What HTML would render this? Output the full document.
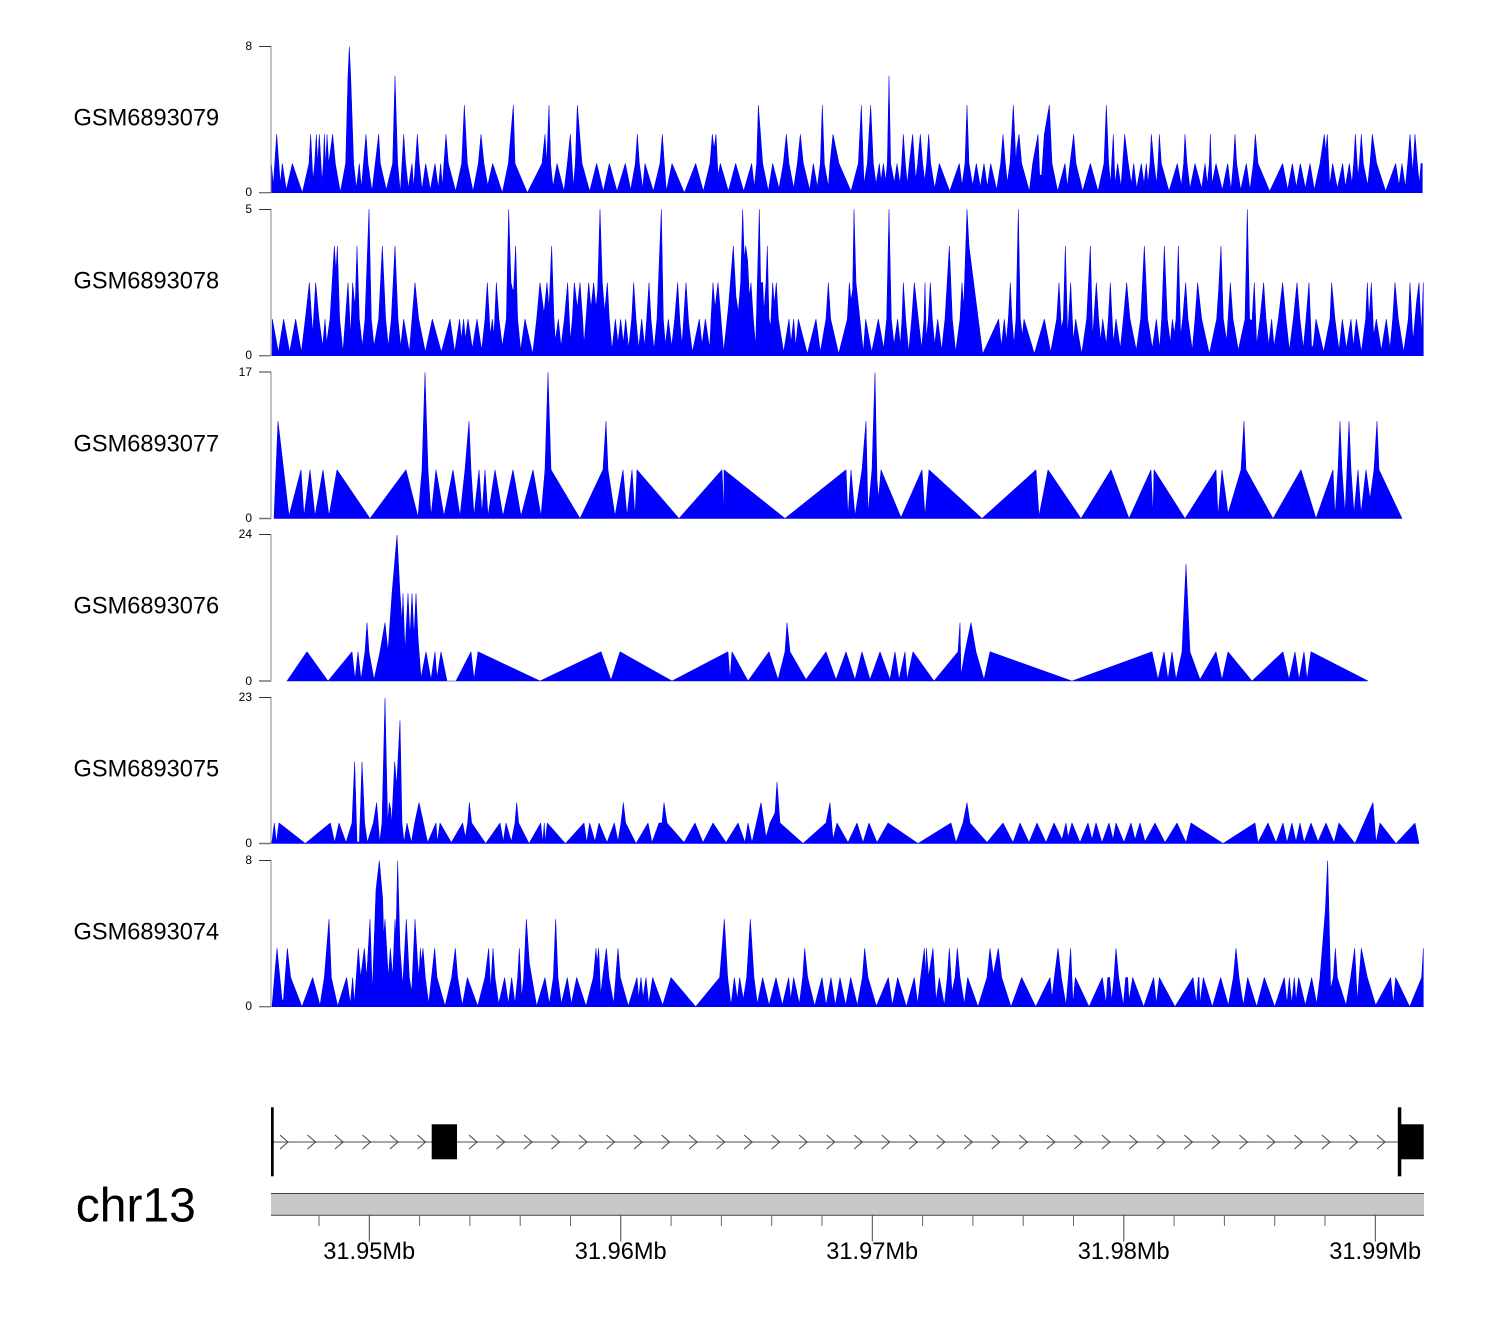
<!DOCTYPE html>
<html lang="en">
<head>
<meta charset="utf-8">
<title>Genome coverage tracks</title>
<style>
html,body{margin:0;padding:0;background:#fff}
svg{display:block}
text{font-family:"Liberation Sans",Arial,sans-serif;fill:#000}
.n{font-size:23.6px}
.y{font-size:12px;text-anchor:end}
.t{font-size:23.6px;text-anchor:middle}
polygon{fill:#0000ff;stroke:#0000ee;stroke-width:.55;vector-effect:non-scaling-stroke;stroke-linejoin:miter;stroke-miterlimit:1.5}
</style>
</head>
<body>
<svg width="1500" height="1320" viewBox="0 0 1500 1320" xmlns="http://www.w3.org/2000/svg">
<rect width="1500" height="1320" fill="#fff"/>

<!-- Track 1 -->
<g transform="translate(230,192.7) scale(.33333,-29.2)">
<polygon points="124,0 124,1 130,.25 140,2 151,.3 157,1 169,.1 187,1 217,0 237,1 242,2 249,.4 254,1 259,2 263,1 268,2 276,.35 280,1 283,2 287,.9 291,2 296,1 308,2 316,1 331,.02 347,1 354,4 358,5 362,4 371,1 379,.15 388,1 394,.15 408,2 414,1 426,.05 446,2 451,1 469,.1 488,1 495,4 503,1 511,0 521,2 527,1 535,.15 546,1 551,.15 562,2 568,1 576,.1 587,1 601,.1 615,1 625,.15 632,1 637,.2 648,2 655,1 677,.05 695,1 703,3 712,1 729,.05 745,1 753,2 762,1 773,.25 788,1 817,0 835,1 850,3 855,1 892,0 936,1 945,2 950,1 957,3 962,1 969,.2 981,1 1002,.05 1012,1 1021,2 1030,.2 1036,1 1042,3 1056,1 1079,.05 1100,1 1120,.05 1138,1 1161,.05 1186,1 1202,.1 1216,1 1222,2 1228,1 1238,.15 1238,0"/>
</g>
<g transform="translate(640,192.7) scale(.33333,-29.2)">
<polygon points="8,0 8,.15 15,1 40,.05 60,1 67,2 73,1 79,.05 96,1 133,0 167,1 190,.05 210,1 217,2 222,1.5 228,2 234,.6 241,1 265,.05 287,1 311,.05 335,1 343,.2 350,1 355,3 368,1 385,.05 398,1 417,.15 430,1 439,2 447,1 461,.15 472,1 481,2 490,1 509,.1 520,1 532,.2 541,1 547,3 553,1 565,.2 570,1 579,2 597,1 633,.05 655,1 664,3 672,.3 682,1 692,3 700,1 708,.3 718,1 723,.4 730,1 737,.4 742,1 747,4 752,1 763,.35 771,1 780,.3 785,1 790,2 796,1 802,.3 808,1 818,2 827,.45 833,1 841,2 848,1 854,.4 860,1 866,2 872,1 884,.15 898,1 929,.05 958,1 966,.25 975,1 981,3 987,1 998,.25 1009,1 1021,.2 1032,1 1042,.2 1052,1 1070,.1 1082,1 1089,2 1096,1 1102,.35 1110,1 1120,3 1128,1 1130,1.5 1137,2 1145,1 1168,.05 1178,1 1194,2 1199,.6 1199,0"/>
</g>
<g transform="translate(1040,192.7) scale(.33333,-29.2)">
<polygon points="-1,0 -1,.6 5,.6 13,2 28,3 36,1 53,.05 75,1 82,.2 90,1 101,2 108,1 128,.05 151,1 174,.05 192,1 199,3 206,1 212,.3 215,1 220,2 225,.3 233,1 243,.2 248,1 254,2 265,1 274,.3 281,1 290,.15 304,1 312,.3 319,1 324,.3 330,1 334,2 342,1 350,.3 354,1 358,2 364,1 387,.05 412,1 424,.25 431,1 435,2 441,1 450,.15 465,1 485,.15 495,1 502,.3 508,1 511,2 516,.3 528,1 547,.1 563,1 573,.1 580,1 585,2 590,1 602,.1 619,1 630,.1 640,1 646,2 654,1 689,.05 728,1 743,.1 757,1 769,.2 781,1 796,.15 810,1 823,.1 840,1 853,2 857,1.4 862,2 869,.25 878,1 892,.15 908,1 916,.2 928,1 936,.3 941,1 946,2 954,.55 958,1 964,2 970,1 983,.25 990,1 997,2 1010,1 1037,.05 1067,1 1077,.25 1086,1 1096,.2 1103,1 1110,2 1118,.7 1125,2 1132,1 1138,.3 1143,1 1147,1 1147,0"/>
</g>

<!-- Track 2 -->
<g transform="translate(230,355.7) scale(.33333,-36.6)">
<polygon points="126,0 127,1 145,.1 161,1 179,.1 197,1 214,.1 226,1 238,2 248,.6 257,2 267,1 278,.25 285,1 290,.35 300,1 313,3 318,2.3 322,3 329,1 339,.1 354,2 362,.55 368,2 373,1.5 376,1.5 381,3 388,1 397,.25 405,1 417,4 424,1 432,.25 446,1 457,3 467,1 475,.25 484,1 495,3 504,1 512,.25 521,1 538,.1 546,1 555,2 566,1 586,.1 607,1 634,.1 660,1 674,.1 689,1 694,.45 701,1 706,.45 714,1 727,.2 741,1 755,.15 765,1 772,2 781,.55 787,1 792,.55 799,2 807,1 817,.25 829,1 836,4 843,2 848,1.8 851,1.8 857,3 863,1 872,.15 885,1 908,.05 920,1 930,2 942,1.15 951,2 957,1.3 965,3 972,1 976,.4 985,1 993,.25 1003,1 1013,2 1021,.4 1027,1 1033,2 1042,1.3 1050,2 1058,1 1062,.3 1068,1 1076,2 1083,1.3 1091,2 1098,1.3 1103,1.8 1110,4 1117,2 1124,1.2 1132,2 1138,1 1146,.15 1156,1 1164,.35 1172,1 1180,.35 1187,1 1196,.2 1205,1 1211,2 1218,1 1226,.2 1235,1 1235,0"/>
</g>
<g transform="translate(640,355.7) scale(.33333,-36.6)">
<polygon points="5,0 5,1 14,.25 20,1 27,2 33,1 42,.15 51,1 64,4 70,1 76,.3 85,1 95,.25 104,1 113,2 120,.9 126,.3 131,1 138,2 146,.9 157,.1 178,1 186,.3 196,1 209,.2 213,1 219,2 225,1.3 234,2 243,1 251,.1 265,1.3 280,3 288,1.6 295,1.2 302,2 308,4 313,2.6 317,3 323,2.6 328,1.6 333,2 340,1 347,.25 352,2 358,4 362,2 368,2 372,1.2 378,2 382,3 387,1 392,.8 398,2 403,1.4 409,2 415,1 431,.1 447,1 453,.35 461,1 467,.25 475,1 502,.05 528,1 541,.1 558,1 565,2 572,1 596,.05 622,1 628,2 633,1.5 638,1.8 642,4 648,2 670,.1 677,1 695,.1 715,1 731,.2 740,1 747,4 754,1 762,.3 773,1 781,.3 786,1 790,2 797,1 806,.1 815,1 823,2 835,1 845,.2 852,1 855,2 859,.45 865,1 871,2 877,1 884,.3 893,1 905,.15 915,1 928,3 937,1 947,.1 960,1 966,2 971,1.3 981,4 987,3 1028,.05 1076,1 1084,.25 1093,1 1099,.4 1105,1 1111,2 1116,1 1122,.3 1128,1 1135,4 1141,1 1147,.55 1152,1 1183,.05 1213,1 1232,.1 1232,0"/>
</g>
<g transform="translate(1040,355.7) scale(.33333,-36.6)">
<polygon points="32,0 32,.1 50,1 57,2 64,.75 70,1 76,3 83,.55 92,2 100,.4 107,1 125,.05 140,1 151,3 158,.5 169,2 176,1 182,.4 188,1 199,.3 205,1 211,2 220,.35 228,1 241,.2 250,1 260,2 270,1 289,.15 302,1 313,3 323,1 337,.2 349,1 359,.2 365,1 373,3 382,1 391,.35 397,1 403,.6 408,1 415,3 422,.55 428,1 437,2 444,1 457,.15 465,1 473,2 485,1 508,.05 530,1 536,1.8 543,3 550,1 560,.4 571,2 579,1 595,.15 615,1 622,4 629,1 636,.95 643,2 650,.3 660,1 671,2 678,1 686,.3 695,1 702,.25 715,1 728,2 738,1 748,.15 760,1 771,2 780,1 790,.2 798,1 807,2 815,.2 820,.3 828,1 851,.1 870,1 875,2 885,1 897,.15 907,1 919,.2 933,1 940,.25 949,1 964,.1 977,1 982,2 987,1 994,2 1001,.55 1009,1 1024,.15 1039,1 1050,.2 1058,1 1065,2 1075,1 1091,.1 1105,1 1110,2 1119,.4 1130,1.5 1137,2 1144,.6 1150,2 1150,0"/>
</g>

<!-- Track 3 -->
<g transform="translate(0,518.5) scale(1,-48.7)">
<polygon points="274,0 278,2 289,.05 301,1 304,.05 310,1 315,.05 323,1 329,.05 337,1 370,0 406,1 418,.03 422,1 425,3 428,1 431,.05 436,1 444,.05 453,1 460,.05 465,1 469,2 471,1 474,.05 479,1 482,.1 485,1 488,.05 495,1 503,.05 513,1 521,.05 533,1 541,.05 545,1 548,3 551,1 580,0 603,1 606,2 608,1 615,.05 623,1 627,.05 632,1 635,.05 637,1 679,0 722,1 724,.05 724,1 785,0 846,1 848,.05 851,1 855,.05 862,1 866,2 868,.1 872,1 875,3 877,.8 878.5,.4 881,1 901,.02 922,1 925,.05 929,1 982,0 1036,1 1039,.05 1048,1 1081,0 1111,1 1129,0 1151,1 1153,.05 1154,1 1185,0 1216,1 1218,.05 1222,1 1228,.1 1241,1 1244,2 1246,1 1273,0 1301,1 1316,0 1333,1 1335,.05 1338,1 1340,2 1342,1 1345,.1 1347,1 1349,2 1351,1 1354,.1 1358,1 1361,.1 1366,1 1370,.4 1374,1 1377,2 1379,1 1402,0"/>
</g>

<!-- Track 4 -->
<g transform="translate(0,681) scale(1,-29.2)">
<polygon points="287,0 307,1 328,0 352,1 355,.05 358,1 361,.05 365,1 367,2 369,1 374,.05 380,1 385,2 388,1 392,3 397,5 400,3 402,2 403,3 405,1 408,3 410,1.5 412,3 414,1.5 416,3 418,1.5 421,.1 426,1 431,.05 435,1 437,.1 441,1 447,0 456,0 471,1 474,.05 478,1 540,0 601,1 611,.03 620,1 672,0 728,1 730,.05 732,1 748,0 769,1 778,.05 785,1 787,2 790,1 806,.05 826,1 836,.05 846,1 855,.05 862,1 870,.05 880,1 890,.05 895,1 899,.05 905,1 907,.05 913,1 934,0 958,1 960,2 961,.2 965,1 971,2 976,1 984,.05 990,1 1072,0 1152,1 1158,.05 1164,1 1168,.05 1172,1 1176,.05 1182,1 1186,4 1190,1 1200,.05 1216,1 1222,.05 1228,1 1252,0 1283,1 1289,.05 1295,1 1299,.05 1304,1 1307,.05 1311,1 1368,0"/>
</g>

<!-- Track 5 -->
<g transform="translate(230,843.5) scale(.33333,-20.5)">
<polygon points="125,0 133,1 139,.05 147,1 226,0 301,1 314,.05 327,1 348,.05 366,1 374,4 381,.1 388,.05 396,4 404,1 412,.05 430,1 440,2 449,.05 456,1 465,7.1 473,1 478,2 482,1.7 485,.9 494,4 500,2.8 510,6 516,1 522,.05 531,1 544,.05 554,1 567,2 593,.05 618,1 622,.05 630,1 664,.05 698,1 706,.3 713,1 718,2 725,1 767,0 810,1 820,.1 828,1 844,.1 855,1 860,2 866,1 897,0 932,1 938,.05 943,1 945,.05 952,1 1006,0 1062,1 1070,.05 1079,1 1095,.1 1107,1 1131,.05 1153,1 1164,.1 1173,1 1180,2 1187,1 1218,0"/>
</g>
<g transform="translate(0,843.5) scale(1,-20.5)">
<polygon points="636,0 648,1 652,.05 659,1 662,1 664,2 667,1 684,.05 695,1 703,.05 713,1 726,.05 738,1 745,.05 748,1 752,.05 761,2 766,.3 770,1 775,1.5 777,3 780,1 803,0 826,1 830,2 833,.2 837,1 848,.05 857,1 863,.05 869,1 877,.05 888,1 918,0 951,1 956,.05 963,1 967,2 970,1 987,.05 1003,1 1013,.05 1020,1 1029,.05 1037,1 1046,.05 1054,1 1062,.2 1066,1 1068,.3 1072,1 1080,.05 1088,1 1092,.2 1096,1 1102,.05 1109,1 1113,.2 1116,1 1124,.05 1131,1 1135,.2 1140,1 1145,.1 1155,1 1165,.05 1177,1 1186,.05 1191,1 1223,0 1255,1 1258,.05 1268,1 1276,.05 1283,1 1287,.05 1292,1 1296,.1 1300,1 1304,.05 1311,1 1318,.1 1326,1 1334,.05 1339,1 1355,0 1373,2 1376,.05 1380,1 1396,0 1415,1 1419,0"/>
</g>

<!-- Track 6 -->
<g transform="translate(230,1006.7) scale(.33333,-29.2)">
<polygon points="126,0 141,2 156,.25 160,.2 172,2 182,1 216,0 248,1 270,.05 283,1 297,3 304,1 323,.02 350,1 361,.1 368,1 373,.1 385,2 392,1 403,2 410,1 420,3 427,.5 438,4 448,5 458,3.7 461,2.4 465,3 475,1 481,2 488,1 495,3 498,2.4 503,5 510,2 518,.7 529,3 538,1 545,.5 555,3 563,1.5 567,1 571,2 574,1.5 579,2 586,1 596,.1 614,2 621,1 645,.02 665,1 676,2 683,1 697,.05 712,1 743,.02 765,1 776,2 782,.6 789,2 795,1 806,.1 824,1 835,.1 845,1 855,.1 863,1 868,2 875,.3 881,1 889,3 898,1.5 920,.02 945,1 958,.1 970,1 977,3 984,1 994,.1 1012,1 1024,.1 1040,1 1068,.02 1090,1 1098,2 1101,1.5 1106,2 1112,.4 1118,1 1129,2 1137,1 1151,.1 1164,2 1171,1 1195,.02 1221,1 1226,.3 1233,1 1233,0"/>
</g>
<g transform="translate(640,1006.7) scale(.33333,-29.2)">
<polygon points="3,0 3,1 9,.3 18,1 26,.1 38,1 68,.05 93,1 167,0 239,1 253,3 263,1 273,.05 283,1 292,.25 299,1 310,.25 320,1 331,3 342,1 352,.1 368,1 387,.05 408,1 427,.05 446,1 452,.25 461,1 478,.1 488,1 494,2 503,1 524,.02 546,1 558,.05 573,1 586,.05 600,1 617,.05 632,1 652,.05 667,1 674,2 684,1 709,.02 745,1 757,.05 773,1 799,0 823,1 833,.1 842,1 853,2 857,1 859,2 866,1 868,1.2 879,2 888,.2 898,1 913,.05 922,1 928,2 936,.5 945,1 952,2 960,1 973,.1 983,1 1014,0 1041,1 1050,2 1060,1.1 1075,2 1085,1 1113,0 1145,1 1187,0 1230,1 1236,.3 1236,0"/>
</g>
<g transform="translate(1040,1006.7) scale(.33333,-29.2)">
<polygon points="36,0 36,.3 43,1 54,2 64,1 78,.05 85,1 92,2 99,.1 106,1 147,0 187,1 198,.1 203,1 209,1 215,.2 222,1 228,2 236,1 250,.05 257,1 263,1 267,.2 278,1 311,0 341,1 349,.1 358,1 405,0 459,1 469,.1 475,1 477,1 480,.1 490,1 517,0 542,1 565,.05 580,1 588,2 597,1 610,.05 623,1 650,0 673,1 704,0 733,1 741,.1 748,1 755,.1 763,1 768,.2 776,1 796,.05 815,1 830,.1 840,1 856,3.3 863,5 868,2.7 872,.6 880,1 886,2 892,1 918,.05 932,1 944,2 952,.2 964,2 982,1 1007,.05 1052,1 1060,.1 1067,1 1109,0 1145,1 1150,2 1150,0"/>
</g>

<!-- Y axes -->
<g fill="none" stroke-width="1">
<path stroke="#888" d="M271 46V192.7M271 209V355.7M271 372V518.5M271 534.5V681M271 697V843.5M271 860V1006.7"/>
<path stroke="#333" d="M259 46.5H271M259 209.5H271M259 372H271M259 534.5H271M259 697.5H271M259 860.5H271"/>
<path stroke="#777" stroke-width="1.4" d="M259 192.7H271M259 355.7H271M259 518.5H271M259 681H271M259 843.5H271M259 1006.7H271"/>
</g>
<text class="y" x="252" y="50">8</text><text class="y" x="252" y="196">0</text>
<text class="y" x="252" y="213">5</text><text class="y" x="252" y="359">0</text>
<text class="y" x="252" y="376">17</text><text class="y" x="252" y="522">0</text>
<text class="y" x="252" y="538">24</text><text class="y" x="252" y="685">0</text>
<text class="y" x="252" y="701">23</text><text class="y" x="252" y="847">0</text>
<text class="y" x="252" y="864">8</text><text class="y" x="252" y="1010">0</text>

<!-- Names -->
<text class="n" x="73.500" y="125.500">GSM6893079</text>
<text class="n" x="73.500" y="288.500">GSM6893078</text>
<text class="n" x="73.500" y="451.500">GSM6893077</text>
<text class="n" x="73.500" y="613.500">GSM6893076</text>
<text class="n" x="73.500" y="776.500">GSM6893075</text>
<text class="n" x="73.500" y="939.500">GSM6893074</text>

<!-- Gene model -->
<path d="M272 1142H1400" stroke="#888" stroke-width="1.5" fill="none"/>
<path fill="none" stroke="#444" stroke-width="1" d="M280 1135l8 7-8 7m27.5-14l8 7-8 7m27.5-14l8 7-8 7m27.5-14l8 7-8 7m27.5-14l8 7-8 7m27.5-14l8 7-8 7"/>
<path fill="none" stroke="#444" stroke-width="1" d="M469 1135l8 7-8 7m27.515-14l8 7-8 7m27.515-14l8 7-8 7m27.515-14l8 7-8 7m27.515-14l8 7-8 7m27.515-14l8 7-8 7m27.515-14l8 7-8 7m27.515-14l8 7-8 7m27.515-14l8 7-8 7m27.515-14l8 7-8 7m27.515-14l8 7-8 7m27.515-14l8 7-8 7m27.515-14l8 7-8 7m27.515-14l8 7-8 7m27.515-14l8 7-8 7m27.515-14l8 7-8 7m27.515-14l8 7-8 7m27.515-14l8 7-8 7m27.515-14l8 7-8 7m27.515-14l8 7-8 7m27.515-14l8 7-8 7m27.515-14l8 7-8 7m27.515-14l8 7-8 7m27.515-14l8 7-8 7m27.515-14l8 7-8 7m27.515-14l8 7-8 7m27.515-14l8 7-8 7m27.515-14l8 7-8 7m27.515-14l8 7-8 7m27.515-14l8 7-8 7m27.515-14l8 7-8 7m27.515-14l8 7-8 7m27.515-14l8 7-8 7m27.515-14l8 7-8 7"/>
<rect x="271" y="1107.300" width="2.700" height="69" fill="#000"/>
<rect x="431.700" y="1124.300" width="25.300" height="35" fill="#000"/>
<rect x="1397.800" y="1107.300" width="3.500" height="69" fill="#000"/>
<rect x="1401" y="1124.300" width="22.700" height="35" fill="#000"/>

<!-- Genome axis -->
<rect x="271" y="1193.500" width="1153" height="21.800" fill="#c8c8c8"/>
<path d="M271 1193.500H1424M271 1215.300H1424" stroke="#444" stroke-width="1" fill="none"/>
<path stroke="#666" stroke-width="1" fill="none" d="M319 1215V1226M419.600 1215V1226M469.900 1215V1226M520.200 1215V1226M570.500 1215V1226M671.100 1215V1226M721.400 1215V1226M771.700 1215V1226M822 1215V1226M922.600 1215V1226M972.900 1215V1226M1023.200 1215V1226M1073.500 1215V1226M1174.100 1215V1226M1224.400 1215V1226M1274.700 1215V1226M1325 1215V1226"/>
<path stroke="#444" stroke-width="1" fill="none" d="M369.300 1215V1241.500M620.800 1215V1241.500M872.300 1215V1241.500M1123.800 1215V1241.500M1375.300 1215V1241.500"/>
<text class="t" x="369.200" y="1258.800">31.95Mb</text>
<text class="t" x="620.700" y="1258.800">31.96Mb</text>
<text class="t" x="872.200" y="1258.800">31.97Mb</text>
<text class="t" x="1123.700" y="1258.800">31.98Mb</text>
<text class="t" x="1375.200" y="1258.800">31.99Mb</text>
<text x="75.800" y="1221.500" style="font-size:48px">chr13</text>
</svg>
</body>
</html>
